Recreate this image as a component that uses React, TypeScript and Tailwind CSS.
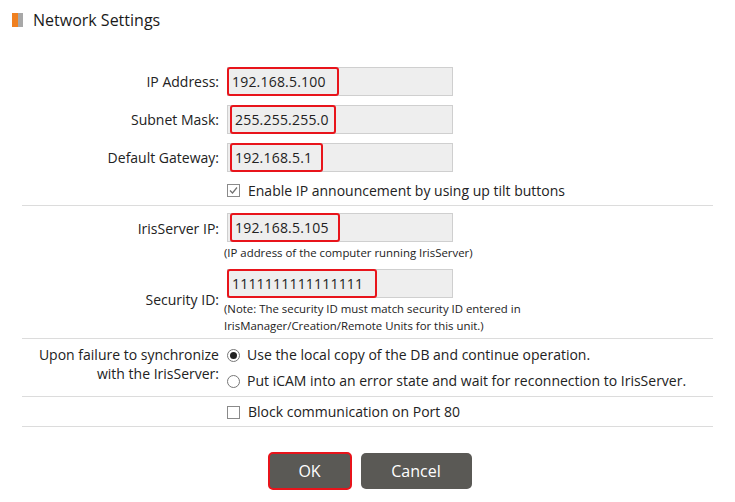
import React from "react";

const font = { fontFamily: '"Open Sans", "Liberation Sans", sans-serif' };

function Field({ value, mark }: { value: string; mark: string }) {
  return (
    <div className="w-[226px] h-[29px] border border-[#cfcfcf] bg-[#eeeeee] flex items-stretch">
      <div
        className={`${mark} -m-px border-2 border-[#e8141b] rounded-[3px] flex items-center pl-[3px] text-[14px] tracking-[0.2px] text-[#222]`}
      >
        {value}
      </div>
    </div>
  );
}

function Row({ label, children, className = "" }: { label: React.ReactNode; children: React.ReactNode; className?: string }) {
  return (
    <div className={`flex ${className}`}>
      <div className="w-[197px] shrink-0 text-right text-[14px] text-[#222]">{label}</div>
      <div className="ml-[8px] flex-1">{children}</div>
    </div>
  );
}

function CheckBox({ checked }: { checked?: boolean }) {
  return (
    <span className="w-[13px] h-[13px] border border-[#8a8a8a] bg-white flex items-center justify-center shrink-0">
      {checked && (
        <svg width="11" height="11" viewBox="0 0 11 11">
          <path d="M2 5.5 L4.5 8 L9 2.5" fill="none" stroke="#707070" strokeWidth="1.2" />
        </svg>
      )}
    </span>
  );
}

function Radio({ checked }: { checked?: boolean }) {
  return (
    <span className="w-[13px] h-[13px] rounded-full border border-[#777] bg-white flex items-center justify-center shrink-0">
      {checked && <span className="w-[7px] h-[7px] rounded-full bg-[#222]" />}
    </span>
  );
}

export default function App() {
  return (
    <div className="w-[735px] h-[502px] bg-white text-[#222]" style={font}>
      {/* Title */}
      <div className="flex items-center pl-[12px] pt-[13px]">
        <span className="w-[6px] h-[14px] bg-[#f08020]" />
        <span className="w-[5px] h-[14px] bg-[#a8a8a8]" />
        <span className="ml-[10px] text-[16px] leading-[14px] text-[#1a1a1a]">Network Settings</span>
      </div>

      <div className="mx-[22px] mt-[40px]">
        <Row label="IP Address:" className="items-center">
          <Field value="192.168.5.100" mark="w-[112px]" />
        </Row>
        <Row label="Subnet Mask:" className="items-center mt-[9px]">
          <Field value="255.255.255.0" mark="w-[106px] ml-[2px]" />
        </Row>
        <Row label="Default Gateway:" className="items-center mt-[9px]">
          <Field value="192.168.5.1" mark="w-[93px] ml-[2px]" />
        </Row>
        <Row label="" className="mt-[9px]">
          <div className="flex items-center gap-[8px] text-[14px] leading-[19px]">
            <CheckBox checked />
            <span>Enable IP announcement by using up tilt buttons</span>
          </div>
        </Row>

        <div className="h-px bg-[#dcdcdc] mt-[5px]" />

        <Row label={<div className="pt-[5px]">IrisServer IP:</div>} className="mt-[7px]">
          <Field value="192.168.5.105" mark="w-[110px] ml-[2px]" />
          <div className="text-[11.4px] leading-[14px] mt-[4px] -ml-[3px]">(IP address of the computer running IrisServer)</div>
        </Row>
        <Row label={<div className="pt-[20px]">Security ID:</div>} className="mt-[9px]">
          <Field value="1111111111111111" mark="w-[150px]" />
          <div className="text-[11.4px] leading-[17px] mt-[2px] -ml-[3px]">
            (Note: The security ID must match security ID entered in
            <br />
            IrisManager/Creation/Remote Units for this unit.)
          </div>
        </Row>

        <div className="h-px bg-[#dcdcdc] mt-[4px]" />

        <Row
          label={
            <div className="leading-[19px] pt-[6px]">
              Upon failure to synchronize
              <br />
              with the IrisServer:
            </div>
          }
        >
          <div className="pt-[6px] text-[14px] leading-[20px]">
            <div className="flex items-center gap-[7px]">
              <Radio checked />
              <span>Use the local copy of the DB and continue operation.</span>
            </div>
            <div className="flex items-center gap-[7px] mt-[6px]">
              <Radio />
              <span>Put iCAM into an error state and wait for reconnection to IrisServer.</span>
            </div>
          </div>
        </Row>

        <div className="h-px bg-[#dcdcdc] mt-[5px]" />

        <Row label="" className="pt-[5px] pb-[4px]">
          <div className="flex items-center gap-[8px] text-[14px] leading-[20px]">
            <CheckBox />
            <span>Block communication on Port 80</span>
          </div>
        </Row>

        <div className="h-px bg-[#dcdcdc]" />
      </div>

      <div className="flex justify-center gap-[9px] mt-[25px] pl-[4px]">
        <button className="w-[84px] h-[38px] rounded-[5px] bg-[#5a5955] border-2 border-[#e8141b] text-white text-[16px]">
          OK
        </button>
        <button className="w-[111px] h-[36px] mt-[1px] rounded-[5px] bg-[#5a5955] text-white text-[16px]">
          Cancel
        </button>
      </div>
    </div>
  );
}
